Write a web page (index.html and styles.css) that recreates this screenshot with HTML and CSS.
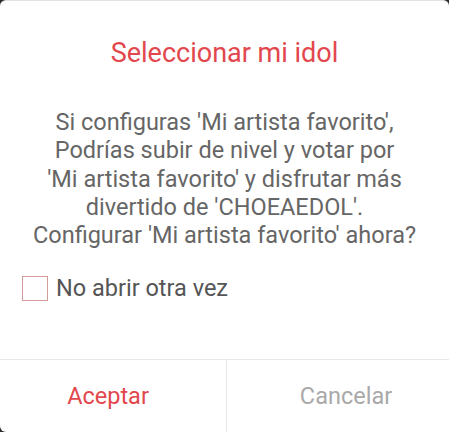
FILE: index.html
```html
<!DOCTYPE html>
<html lang="es">
<head>
  <meta charset="UTF-8" />
  <meta name="viewport" content="width=device-width, initial-scale=1.0" />
  <title>Seleccionar mi idol</title>
  <link rel="stylesheet" href="styles.css">
</head>
<body>
  <div class="dialog">
    <h1 class="dialog-title">Seleccionar mi idol</h1>
    <p class="dialog-text">
      Si configuras 'Mi artista favorito',<br>
      Podrías subir de nivel y votar por<br>
      'Mi artista favorito' y disfrutar más<br>
      divertido de 'CHOEAEDOL'.<br>
      Configurar 'Mi artista favorito' ahora?
    </p>
    <label class="check-row">
      <span class="check-box"></span>
      <span class="check-label">No abrir otra vez</span>
    </label>
    <div class="dialog-actions">
      <button class="btn btn-ok">Aceptar</button>
      <button class="btn btn-cancel">Cancelar</button>
    </div>
  </div>
</body>
</html>
```
FILE: styles.css
```css
html, body {
  height: 100%;
}
body {
  margin: 0;
  background: #2b2b2b;
  font-family: Roboto, "Noto Sans", sans-serif;
}

.dialog {
  height: 100%;
  box-sizing: border-box;
  background: #fff;
  border-top: 1px solid #e2e2e2;
  border-radius: 6px 6px 0 6px;
  display: flex;
  flex-direction: column;
}

.dialog-title {
  margin: 36px 0 0;
  text-align: center;
  font-size: 27px;
  font-weight: 400;
  line-height: 32px;
  color: #e2474d;
}

.dialog-text {
  margin: 39px 0 0;
  text-align: center;
  font-size: 23.5px;
  line-height: 28.25px;
  color: #666;
}

.check-row {
  display: flex;
  align-items: center;
  gap: 8px;
  margin: 25px 0 0 22px;
}
.check-box {
  width: 26px;
  height: 25px;
  box-sizing: border-box;
  border: 1px solid #d49a9a;
}
.check-label {
  font-size: 23.5px;
  color: #555;
}

.dialog-actions {
  margin-top: auto;
  height: 72px;
  display: flex;
  border-top: 1px solid #e8e8e8;
}
.btn {
  flex: 1;
  border: none;
  background: none;
  font-family: inherit;
  font-size: 23.5px;
  padding: 0;
}
.btn-ok {
  flex: 0 0 227px;
  padding-right: 10px;
  color: #e2474d;
  border-right: 1px solid #e8e8e8;
}
.btn-cancel {
  padding-left: 16px;
  color: #a9a9a9;
}
```
